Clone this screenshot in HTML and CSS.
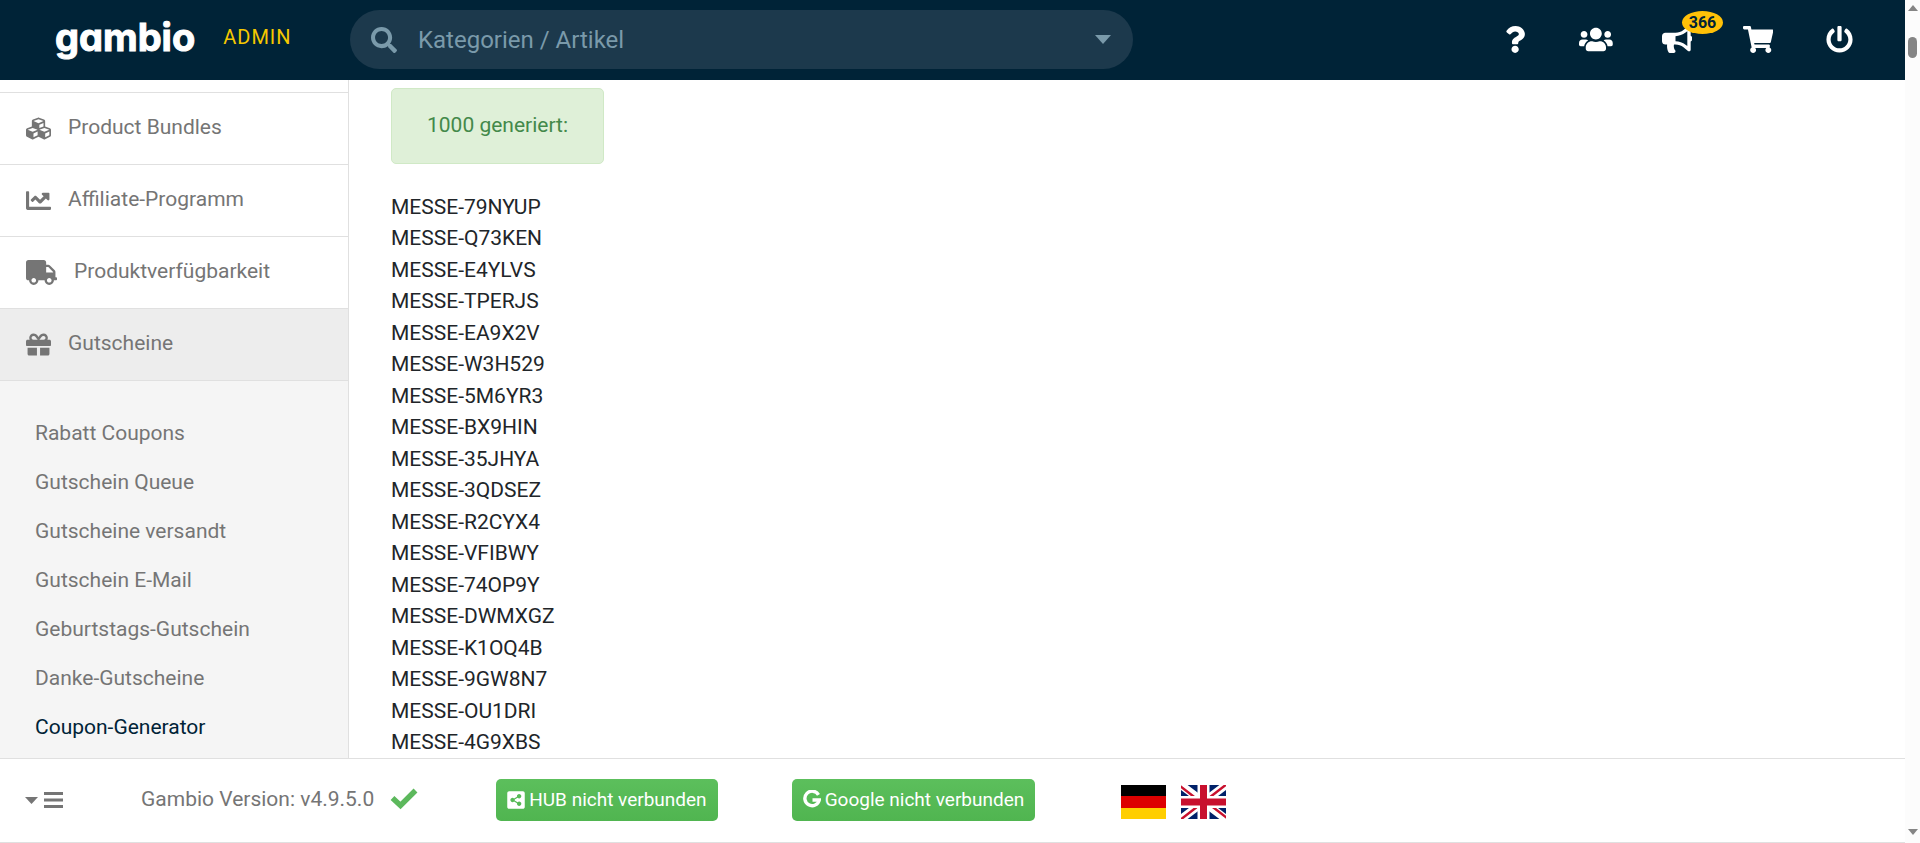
FILE: index.html
```
<!DOCTYPE html>
<html lang="de">
<head>
<meta charset="utf-8">
<title>Coupon-Generator – Gambio Admin</title>
<link rel="stylesheet" href="styles.css">
</head>
<body>
<div class="window">
  <div class="app">
    <header class="topbar">
      <a class="brand" href="#"><span class="wordmark">gambio</span><span class="brand-role">ADMIN</span></a>
      <form class="search">
        <svg class="icon-search" viewBox="0 0 512 512"><path d="M505 442.700L405.300 343c-4.500-4.500-10.600-7-17-7H372c27.600-35.300 44-79.700 44-128C416 93.100 322.900 0 208 0S0 93.100 0 208s93.100 208 208 208c48.300 0 92.700-16.400 128-44v16.300c0 6.400 2.500 12.500 7 17l99.700 99.700c9.400 9.400 24.600 9.400 33.900 0l28.300-28.300c9.400-9.400 9.400-24.600.1-34zM208 336c-70.700 0-128-57.200-128-128 0-70.700 57.200-128 128-128 70.700 0 128 57.200 128 128 0 70.700-57.200 128-128 128z"/></svg>
        <input class="search-input" type="text" placeholder="Kategorien / Artikel" aria-label="Suche">
        <button class="search-toggle" type="button" aria-label="Suchbereich"><svg viewBox="0 0 16 9"><path d="M0 0h16L8 9z"/></svg></button>
      </form>
      <nav class="actions">
        <a class="action" href="#" aria-label="Hilfe"><svg viewBox="0 0 384 512"><path d="M202.021 0C122.202 0 70.503 32.703 29.914 91.026c-7.363 10.580-5.093 25.086 5.178 32.874l43.138 32.709c10.373 7.865 25.132 6.026 33.253-4.148 25.049-31.381 43.630-49.449 82.757-49.449 30.764 0 68.816 19.799 68.816 49.631 0 22.552-18.617 34.134-48.993 51.164-35.423 19.860-82.299 44.576-82.299 106.405V320c0 13.255 10.745 24 24 24h72.471c13.255 0 24-10.745 24-24v-5.773c0-42.860 125.268-44.645 125.268-160.627C377.504 66.256 286.902 0 202.021 0zM192 373.459c-38.196 0-69.271 31.075-69.271 69.271 0 38.195 31.075 69.270 69.271 69.270s69.271-31.075 69.271-69.271-31.075-69.270-69.271-69.270z"/></svg></a>
        <a class="action" href="#" aria-label="Kunden"><svg viewBox="0 0 640 512"><path d="M96 224c35.300 0 64-28.700 64-64s-28.700-64-64-64-64 28.700-64 64 28.700 64 64 64zm448 0c35.300 0 64-28.700 64-64s-28.700-64-64-64-64 28.700-64 64 28.700 64 64 64zm32 32h-64c-17.600 0-33.500 7.100-45.100 18.600 40.300 22.100 68.900 62 75.100 109.400h66c17.700 0 32-14.300 32-32v-32c0-35.300-28.700-64-64-64zm-256 0c61.900 0 112-50.100 112-112S381.900 32 320 32 208 82.100 208 144s50.100 112 112 112zm76.800 32h-8.300c-20.800 10-43.900 16-68.500 16s-47.600-6-68.500-16h-8.300C179.600 288 128 339.600 128 403.200V432c0 26.500 21.500 48 48 48h288c26.500 0 48-21.500 48-48v-28.800c0-63.600-51.600-115.200-115.200-115.200zm-223.700-13.400C161.500 263.100 145.600 256 128 256H64c-35.300 0-64 28.700-64 64v32c0 17.700 14.300 32 32 32h65.900c6.300-47.400 34.900-87.300 75.200-109.400z"/></svg></a>
        <a class="action" href="#" aria-label="Nachrichten"><svg viewBox="0 0 576 512"><path d="M576 240c0-23.630-12.950-44.040-32-55.120V32.010C544 23.260 537.020 0 512 0c-7.120 0-14.190 2.380-19.980 7.020l-85.030 68.030C364.280 109.190 310.660 128 256 128H64c-35.350 0-64 28.650-64 64v96c0 35.350 28.650 64 64 64h33.700c-1.390 10.480-2.180 21.140-2.180 32 0 39.770 9.260 77.350 25.560 110.940 5.190 10.690 16.520 17.060 28.400 17.060h74.280c26.050 0 41.690-29.840 25.900-50.560-16.400-21.520-26.150-48.360-26.150-77.440 0-11.110 1.620-21.790 4.410-32H256c54.660 0 108.280 18.810 150.980 52.950l85.030 68.030a32.023 32.023 0 0 0 19.980 7.020c24.920 0 32-22.780 32-32V295.130C563.050 284.040 576 263.630 576 240zm-96 141.420l-33.050-26.440C392.950 311.780 325.120 288 256 288v-96c69.120 0 136.950-23.780 190.950-66.980L480 98.580v282.840z"/></svg><span class="badge">366</span></a>
        <a class="action" href="#" aria-label="Bestellungen"><svg viewBox="0 0 576 512"><path d="M528.120 301.319l47.273-208C578.806 78.301 567.391 64 551.990 64H159.208l-9.166-44.810C147.758 8.021 137.930 0 126.529 0H24C10.745 0 0 10.745 0 24v16c0 13.255 10.745 24 24 24h69.883l70.248 343.435C147.325 417.100 136 435.222 136 456c0 30.928 25.072 56 56 56s56-25.072 56-56c0-15.674-6.447-29.835-16.824-40h209.647C430.447 426.165 424 440.326 424 456c0 30.928 25.072 56 56 56s56-25.072 56-56c0-22.172-12.888-41.332-31.579-50.405l5.517-24.276c3.413-15.018-8.002-29.319-23.403-29.319H218.117l-6.545-32h293.145c11.206 0 20.920-7.754 23.403-18.681z"/></svg></a>
        <a class="action" href="#" aria-label="Abmelden"><svg viewBox="0 0 512 512"><path d="M400 54.100c63 45 104 118.600 104 201.900 0 136.800-110.800 247.700-247.500 248C120 504.300 8.200 393 8 256.400 7.900 173.100 48.900 99.300 111.800 54.200c11.700-8.300 28-4.800 35 7.700L162.600 90c5.900 10.500 3.100 23.800-6.600 31-41.500 30.800-68 79.600-68 134.900-.1 92.300 74.500 168.100 168 168.100 91.600 0 168.600-74.200 168-169.100-.3-51.800-24.700-101.800-68.100-134-9.700-7.200-12.400-20.500-6.500-30.900l15.800-28.100c7-12.400 23.200-16.100 34.800-7.800zM296 264V24c0-13.300-10.700-24-24-24h-32c-13.300 0-24 10.700-24 24v240c0 13.300 10.700 24 24 24h32c13.300 0 24-10.700 24-24z"/></svg></a>
      </nav>
    </header>

    <div class="body">
      <aside class="sidebar">
        <nav class="menu">
          <a class="menu-item" href="#"><svg class="menu-icon" viewBox="0 0 512 512"><path d="M488.600 250.200L392 214V105.500c0-15-9.300-28.400-23.400-33.700l-100-37.500c-8.100-3.100-17.100-3.100-25.300 0l-100 37.500c-14.100 5.300-23.400 18.700-23.400 33.700V214l-96.600 36.200C9.300 255.500 0 268.900 0 283.900V394c0 13.600 7.700 26.100 19.900 32.200l100 50c10.100 5.100 22.100 5.100 32.200 0l103.900-52 103.900 52c10.100 5.100 22.100 5.100 32.200 0l100-50c12.200-6.100 19.900-18.600 19.900-32.200V283.900c0-15-9.300-28.400-23.400-33.700zM358 214.800l-85 31.900v-68.200l85-37v73.300zM154 104.100l102-38.200 102 38.200v.6l-102 41.400-102-41.400v-.6zm84 291.100l-85 42.500v-79.100l85-38.800v75.400zm0-112l-102 41.400-102-41.400v-.6l102-38.200 102 38.200v.6zm240 112l-85 42.500v-79.100l85-38.800v75.400zm0-112l-102 41.400-102-41.400v-.6l102-38.200 102 38.200v.6z"/></svg>Product Bundles</a>
          <a class="menu-item" href="#"><svg class="menu-icon" viewBox="0 0 512 512"><path d="M496 384H64V80c0-8.840-7.160-16-16-16H16C7.160 64 0 71.160 0 80v336c0 17.670 14.330 32 32 32h464c8.840 0 16-7.160 16-16v-32c0-8.840-7.160-16-16-16zM464 96H345.940c-21.380 0-32.090 25.850-16.970 40.970l32.400 32.400L288 242.750l-73.370-73.370c-12.500-12.500-32.760-12.500-45.250 0l-68.690 68.690c-6.250 6.250-6.250 16.380 0 22.630l22.620 22.620c6.250 6.250 16.380 6.250 22.630 0L192 237.250l73.370 73.370c12.500 12.500 32.760 12.500 45.250 0l96-96 32.400 32.400c15.120 15.120 40.970 4.410 40.970-16.970V112c.01-8.840-7.150-16-15.990-16z"/></svg>Affiliate-Programm</a>
          <a class="menu-item" href="#"><svg class="menu-icon menu-icon-wide" viewBox="0 0 640 512"><path d="M624 352h-16V243.900c0-12.700-5.100-24.900-14.100-33.900L494 110.100c-9-9-21.200-14.100-33.900-14.100H416V48c0-26.500-21.500-48-48-48H48C21.500 0 0 21.500 0 48v320c0 26.500 21.500 48 48 48h16c0 53 43 96 96 96s96-43 96-96h128c0 53 43 96 96 96s96-43 96-96h48c8.800 0 16-7.200 16-16v-32c0-8.800-7.200-16-16-16zM160 464c-26.500 0-48-21.500-48-48s21.500-48 48-48 48 21.500 48 48-21.500 48-48 48zm320 0c-26.500 0-48-21.500-48-48s21.500-48 48-48 48 21.500 48 48-21.500 48-48 48zm80-208H416V144h44.100l99.900 99.900V256z"/></svg>Produktverfügbarkeit</a>
          <a class="menu-item menu-item-open" href="#"><svg class="menu-icon" viewBox="0 0 512 512"><path d="M32 448c0 17.700 14.300 32 32 32h160V320H32v128zm256 32h160c17.700 0 32-14.300 32-32V320H288v160zm192-320h-42.100c6.200-12.100 10.100-25.500 10.100-40 0-48.500-39.500-88-88-88-41.600 0-68.500 21.300-103 68.300-34.500-47-61.400-68.300-103-68.300-48.500 0-88 39.500-88 88 0 14.500 3.800 27.900 10.100 40H32c-17.700 0-32 14.300-32 32v80c0 8.800 7.200 16 16 16h480c8.800 0 16-7.200 16-16v-80c0-17.700-14.300-32-32-32zm-326.100 0c-22.100 0-40-17.900-40-40s17.900-40 40-40c19.900 0 34.600 3.300 86.100 80h-86.100zm206.100 0h-86.100c51.400-76.500 65.700-80 86.100-80 22.100 0 40 17.900 40 40s-17.900 40-40 40z"/></svg>Gutscheine</a>
        </nav>
        <nav class="submenu">
          <a href="#">Rabatt Coupons</a>
          <a href="#">Gutschein Queue</a>
          <a href="#">Gutscheine versandt</a>
          <a href="#">Gutschein E-Mail</a>
          <a href="#">Geburtstags-Gutschein</a>
          <a href="#">Danke-Gutscheine</a>
          <a class="current" href="#">Coupon-Generator</a>
        </nav>
      </aside>

      <main class="content">
        <p class="alert">1000 generiert:</p>
        <ul class="codes">
          <li>MESSE-79NYUP</li>
          <li>MESSE-Q73KEN</li>
          <li>MESSE-E4YLVS</li>
          <li>MESSE-TPERJS</li>
          <li>MESSE-EA9X2V</li>
          <li>MESSE-W3H529</li>
          <li>MESSE-5M6YR3</li>
          <li>MESSE-BX9HIN</li>
          <li>MESSE-35JHYA</li>
          <li>MESSE-3QDSEZ</li>
          <li>MESSE-R2CYX4</li>
          <li>MESSE-VFIBWY</li>
          <li>MESSE-74OP9Y</li>
          <li>MESSE-DWMXGZ</li>
          <li>MESSE-K1OQ4B</li>
          <li>MESSE-9GW8N7</li>
          <li>MESSE-OU1DRI</li>
          <li>MESSE-4G9XBS</li>
        </ul>
      </main>
    </div>

    <footer class="footer">
      <button class="menu-toggle" type="button" aria-label="Menü"><svg viewBox="0 0 38 16"><path d="M0 5h13L6.500 12z"/><path d="M19 0h19v3H19zM19 6.500h19v3H19zM19 13h19v3H19z"/></svg></button>
      <div class="version"><span>Gambio Version: v4.9.5.0</span><svg class="check" viewBox="0 0 28 24"><path d="M2.500 10l8 7.500L25.500 2.500" fill="none" stroke="currentColor" stroke-width="5.500"/></svg></div>
      <button class="status" type="button"><svg viewBox="0 0 448 512"><path d="M448 80v352c0 26.500-21.500 48-48 48H48c-26.500 0-48-21.500-48-48V80c0-26.500 21.500-48 48-48h352c26.500 0 48 21.500 48 48zM304 296c-14.600 0-27.800 5.700-37.800 14.900l-75.500-41.900c1.700-8.600 1.700-17.400 0-26l75.500-41.900A55.800 55.800 0 0 0 304 216c30.900 0 56-25.100 56-56s-25.100-56-56-56-56 25.100-56 56c0 4.500.5 8.800 1.500 13l-75.500 41.900A55.800 55.800 0 0 0 136 200c-30.900 0-56 25.100-56 56s25.100 56 56 56c14.600 0 27.800-5.700 37.800-14.900l75.500 41.900c-1 4.200-1.300 8.500-1.300 13 0 30.900 25.100 56 56 56s56-25.100 56-56-25.100-56-56-56z"/></svg>HUB nicht verbunden</button>
      <button class="status" type="button"><svg viewBox="0 0 18 20"><path d="M15.500 4.800A7.300 7.300 0 1 0 16.300 10H9.500" fill="none" stroke="currentColor" stroke-width="3.400"/></svg>Google nicht verbunden</button>
      <div class="languages">
        <a href="#" aria-label="Deutsch"><svg viewBox="0 0 45 34"><path d="M0 0h45v12H0z" fill="#000"/><path d="M0 11h45v12H0z" fill="#d00"/><path d="M0 23h45v11H0z" fill="#ffce00"/></svg></a>
        <a href="#" aria-label="English"><svg viewBox="0 0 45 34"><path d="M0 0h45v34H0z" fill="#012169"/><path d="M0 0l45 34M45 0L0 34" stroke="#fff" stroke-width="8"/><path d="M-1 1l22 17M24 16L46-1M46 33L24 16M21 18L-1 35" stroke="#c8102e" stroke-width="2.500"/><path d="M22.500 0v34M0 17h45" stroke="#fff" stroke-width="12"/><path d="M22.500 0v34M0 17h45" stroke="#c8102e" stroke-width="7"/></svg></a>
      </div>
    </footer>
  </div>
  <div class="scrollbar" aria-hidden="true">
    <svg class="arrow" viewBox="0 0 10 6"><path d="M0 6h10L5 0z"/></svg>
    <span class="thumb"></span>
    <svg class="arrow arrow-down" viewBox="0 0 10 6"><path d="M0 0h10L5 6z"/></svg>
  </div>
</div>
</body>
</html>
```
FILE: styles.css
```
* { box-sizing: border-box; }
body {
  margin: 0;
  font-family: Roboto, "Liberation Sans", sans-serif;
  font-size: 21px;
  line-height: 1.5;
  color: #212529;
  background: #fff;
}
a { color: inherit; text-decoration: none; }
svg { display: block; fill: currentColor; }
button, input { font: inherit; color: inherit; border: 0; background: none; padding: 0; }

.window { display: flex; height: 100vh; overflow: hidden; }
.app { flex: 1; min-width: 0; display: flex; flex-direction: column; }

/* Top bar */
.topbar {
  flex: none;
  display: flex;
  align-items: center;
  height: 80px;
  padding: 0 49px 1px 55px;
  background: #002337;
  color: #fff;
}
.brand { display: flex; align-items: center; width: 295px; gap: 28px; padding-bottom: 6px; }
.wordmark {
  font-family: Inter, sans-serif;
  font-size: 38px;
  font-weight: 700;
  line-height: 68px;
  font-feature-settings: "cv11";
  -webkit-text-stroke: 1px currentColor;
}
.brand-role { font-size: 20px; letter-spacing: 1px; color: #f5c800; line-height: 68px; }
.search {
  display: flex;
  align-items: center;
  width: 783px;
  height: 59px;
  padding: 0 22px 0 21px;
  border-radius: 30px;
  background: #1c394c;
  color: #7a9aaa;
}
.icon-search { width: 26px; height: 26px; }
.search-input { flex: 1; min-width: 0; margin-left: 21px; font-size: 24px; outline: 0; }
.search-input::placeholder { color: inherit; opacity: 1; }
.search-toggle svg { width: 16px; height: 9px; }
.actions { display: flex; gap: 47px; margin-left: auto; }
.action { position: relative; display: flex; justify-content: center; width: 34px; }
.action svg { height: 27px; }
.badge {
  position: absolute;
  top: -15px;
  left: 22px;
  width: 41px;
  height: 23px;
  border-radius: 50%;
  background: #ffc107;
  color: #002337;
  font-size: 16px;
  font-weight: 700;
  line-height: 23px;
  text-align: center;
}

/* Middle area */
.body { flex: 1; min-height: 0; display: flex; overflow: hidden; }
.sidebar {
  flex: none;
  width: 349px;
  border-right: 1px solid #e0e0e0;
  background: #f5f5f5;
  color: #757575;
}
.menu { padding-top: 12px; background: #fff; border-bottom: 1px solid #e0e0e0; }
.menu-item {
  display: flex;
  align-items: center;
  gap: 17px;
  height: 72px;
  padding: 0 26px 1px;
  border-top: 1px solid #e0e0e0;
}
.menu-item-open { background: #ededed; }
.menu-icon { width: 25px; height: 25px; }
.menu-icon-wide { width: 31px; }
.submenu { display: flex; flex-direction: column; padding: 28px 35px 0; }
.submenu a { line-height: 49px; }
.submenu .current { color: #002337; }

.content { flex: 1; min-width: 0; padding: 8px 42px 0; }
.alert {
  width: fit-content;
  margin: 0 0 28px;
  padding: 21px 35px;
  border: 1px solid #d0e9c6;
  border-radius: 5px;
  background: #dff0d8;
  color: #43894a;
}
.codes { margin: 0; padding: 0; list-style: none; }

/* Footer */
.footer {
  flex: none;
  display: flex;
  align-items: center;
  height: 85px;
  padding: 0 0 1px 25px;
  border: solid #e0e0e0;
  border-width: 1px 0;
  background: #fff;
  color: #757575;
}
.menu-toggle svg { width: 38px; height: 16px; }
.version { display: flex; align-items: center; gap: 16px; margin: 0 78px; }
.check { width: 28px; height: 24px; color: #5cb85c; }
.status {
  display: flex;
  align-items: center;
  gap: 4px;
  height: 42px;
  margin-right: 74px;
  padding: 0 11px;
  border-radius: 5px;
  background: linear-gradient(#5cbf5c, #50b550);
  color: #fff;
  font-size: 19px;
}
.status svg { width: 18px; height: 20px; }
.languages { display: flex; gap: 15px; margin-left: 12px; padding-top: 3px; }
.languages svg { width: 45px; height: 34px; }

/* Scroll track */
.scrollbar {
  flex: none;
  display: flex;
  flex-direction: column;
  align-items: center;
  width: 15px;
  padding: 5px 0 8px;
  background: #fcfcfc;
  color: #858585;
}
.arrow { width: 10px; height: 6px; }
.thumb { width: 9px; height: 21px; margin-top: 26px; border-radius: 5px; background: #858585; }
.arrow-down { margin-top: auto; }
```
